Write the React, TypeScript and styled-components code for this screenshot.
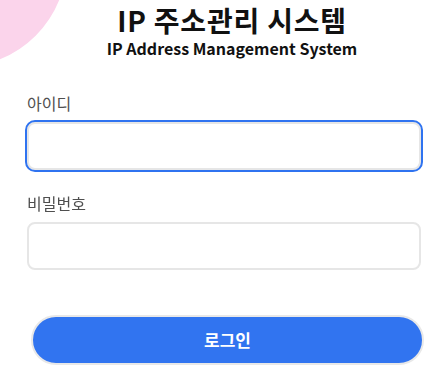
import React from "react";
import styled, { createGlobalStyle } from "styled-components";

const GlobalStyle = createGlobalStyle`
  html, body {
    margin: 0;
    padding: 0;
    background: #ffffff;
  }
  body {
    font-family: "Noto Sans CJK KR", "Noto Sans", sans-serif;
    color: #111;
  }
`;

const Page = styled.div`
  position: relative;
  width: 439px;
  height: 378px;
  overflow: hidden;
  background: #ffffff;
`;

const Ring = styled.div`
  position: absolute;
  left: -147px;
  top: -147px;
  width: 214px;
  height: 214px;
  box-sizing: border-box;
  border: 52px solid #fbd4eb;
  border-radius: 50%;
  pointer-events: none;
`;

const Content = styled.div`
  position: relative;
  display: flex;
  flex-direction: column;
  padding: 4px 19px 0 27px;
`;

const Header = styled.header`
  display: flex;
  flex-direction: column;
  align-items: center;
  padding-left: 17px;
`;

const Title = styled.h1`
  margin: 0;
  font-size: 28px;
  line-height: 33.6px;
  font-weight: 700;
  letter-spacing: 0.8px;
  color: #111;
`;

const Subtitle = styled.p`
  margin: 0;
  font-size: 16px;
  line-height: 20.8px;
  font-weight: 700;
  color: #111;
`;

const Form = styled.form`
  display: flex;
  flex-direction: column;
  margin-top: 32.6px;
`;

const Field = styled.div<{ $gap?: number }>`
  display: flex;
  flex-direction: column;
  gap: 7px;
  margin-bottom: ${(p) => p.$gap ?? 0}px;
`;

const Label = styled.label`
  font-size: 16px;
  line-height: 24px;
  color: #4f4f4f;
`;

const Input = styled.input`
  box-sizing: border-box;
  width: 394px;
  height: 48px;
  padding: 0 12px;
  border: 2px solid #e6e6e6;
  border-radius: 8px;
  font-family: inherit;
  font-size: 16px;
  color: #222;
  caret-color: #333;
  background: #fff;
  outline: none;

  &:focus {
    outline: 2px solid #2f73f0;
    outline-offset: 0;
  }
`;

const Button = styled.button`
  box-sizing: border-box;
  width: 393px;
  height: 50px;
  margin-left: 4px;
  border: 2px solid #e8e8e8;
  border-radius: 25px;
  background: #3174f0;
  color: #fff;
  font-family: inherit;
  font-size: 17px;
  font-weight: 700;
  cursor: pointer;
`;

export default function App() {
  return (
    <>
      <GlobalStyle />
      <Page>
        <Ring />
        <Content>
          <Header>
            <Title>IP 주소관리 시스템</Title>
            <Subtitle>IP Address Management System</Subtitle>
          </Header>
          <Form onSubmit={(e) => e.preventDefault()}>
            <Field $gap={21}>
              <Label htmlFor="userId">아이디</Label>
              <Input id="userId" type="text" autoFocus />
            </Field>
            <Field $gap={45}>
              <Label htmlFor="userPw">비밀번호</Label>
              <Input id="userPw" type="password" />
            </Field>
            <Button type="submit">로그인</Button>
          </Form>
        </Content>
      </Page>
    </>
  );
}
